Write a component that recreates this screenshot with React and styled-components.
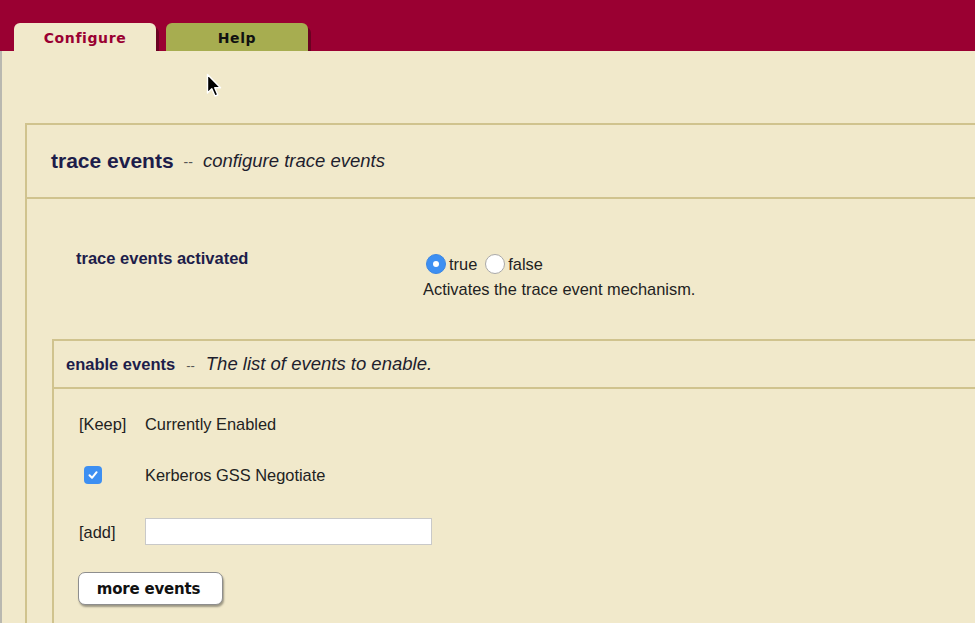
import React from "react";
import styled, { createGlobalStyle } from "styled-components";

const Global = createGlobalStyle`
  html, body { margin: 0; padding: 0; background: #f1e9cb; }
  body { font-family: "Liberation Sans", Arial, sans-serif; color: #222; }
  #root { width: 975px; height: 623px; overflow: hidden; }
`;

const Page = styled.div`
  position: relative;
  width: 975px;
  height: 623px;
  overflow: hidden;
  background: #f1e9cb;
`;

const TopBar = styled.div`
  height: 51px;
  background: #9a0032;
  display: flex;
  align-items: flex-end;
  gap: 10px;
  padding-left: 14px;
  overflow: hidden;
`;

const Tab = styled.div`
  width: 142px;
  height: 28px;
  box-sizing: border-box;
  border-radius: 6px 6px 0 0;
  background: ${(p) => (p.$active ? "#f1e9cb" : "#a7ad50")};
  color: ${(p) => (p.$active ? "#9a0032" : "#111")};
  box-shadow: 3px 4px 0 #6a0222;
  display: flex;
  align-items: center;
  justify-content: center;
  padding-top: 2px;
  font-family: "DejaVu Sans", Verdana, sans-serif;
  font-weight: bold;
  font-size: 14px;
  letter-spacing: 0.6px;
`;

const Content = styled.div`
  height: 572px;
  box-sizing: border-box;
  border-left: 2px solid #b9b8b0;
  padding: 72px 0 0 23px;
`;

const Panel = styled.section`
  border-top: 2px solid #d0c38e;
  border-left: 2px solid #d0c38e;
  width: calc(100% + 40px);
`;

const PanelHeader = styled.div`
  display: flex;
  align-items: center;
  height: ${(p) => p.$h}px;
  padding-left: ${(p) => p.$pl}px;
  border-bottom: 2px solid #d0c38e;
  white-space: nowrap;
`;

const Title = styled.span`
  font-weight: bold;
  font-size: ${(p) => p.$size}px;
  color: #1d1d4a;
`;

const Dash = styled.span`
  font-size: ${(p) => p.$size}px;
  color: #555;
  margin: 0 ${(p) => p.$gap}px;
  position: relative;
  top: 1px;
`;

const Subtitle = styled.span`
  font-style: italic;
  font-size: 18.5px;
  color: #1e1e2e;
`;

const MainBody = styled.div`
  padding: 49px 0 60px 25px;
`;

const SettingRow = styled.div`
  display: grid;
  grid-template-columns: 347px 1fr;
  padding-left: 24px;
  margin-bottom: 40px;
`;

const SettingLabel = styled.div`
  font-weight: bold;
  font-size: 16.5px;
  line-height: 20px;
  color: #1d1d4a;
`;

const SettingValue = styled.div`
  display: flex;
  flex-direction: column;
`;

const RadioRow = styled.div`
  display: flex;
  align-items: center;
  height: 20px;
  margin-top: 6px;
  margin-left: 3px;
  font-size: 16.4px;
`;

const RadioLabel = styled.label`
  display: flex;
  align-items: center;
  gap: 3px;
  margin-right: 8px;
`;

const Radio = styled.span`
  width: 20px;
  height: 20px;
  box-sizing: border-box;
  border-radius: 50%;
  background: ${(p) => (p.$on ? "#3d8ff2" : "#fff")};
  border: 1px solid ${(p) => (p.$on ? "#3a86e4" : "#a9a9a9")};
  display: flex;
  align-items: center;
  justify-content: center;
  &::after {
    content: "";
    display: ${(p) => (p.$on ? "block" : "none")};
    width: 6px;
    height: 6px;
    border-radius: 50%;
    background: #fff;
  }
`;

const Description = styled.div`
  margin-top: 5px;
  font-size: 16.4px;
  line-height: 20px;
`;

const InnerBody = styled.div`
  padding: 25px 0 60px 25px;
  display: flex;
  flex-direction: column;
  align-items: flex-start;
`;

const EventRow = styled.div`
  display: grid;
  grid-template-columns: 66px 1fr;
  align-items: center;
  min-height: 20px;
  margin-top: ${(p) => p.$mt || 0}px;
  font-size: 16.4px;
  line-height: 20px;
`;

const Checkbox = styled.span`
  width: 18px;
  height: 18px;
  margin-left: 5px;
  border-radius: 4px;
  background: #3d8ff2;
  display: flex;
  align-items: center;
  justify-content: center;
`;

const TextInput = styled.input`
  width: 287px;
  height: 27px;
  box-sizing: border-box;
  border: 1px solid #c9c9c9;
  background: #fff;
  margin: 0;
  padding: 0 4px;
  font-size: 15px;
`;

const Button = styled.button`
  margin-top: 27px;
  margin-left: -1px;
  width: 145px;
  height: 33px;
  border: 1px solid #8e8e8e;
  border-radius: 7px;
  background: #fff;
  box-shadow: 1px 2px 2px rgba(0, 0, 0, 0.35);
  font-family: "DejaVu Sans", Verdana, sans-serif;
  font-weight: bold;
  font-size: 15px;
  letter-spacing: -0.2px;
  color: #111;
  padding: 0 4px 0 0;
`;

const Cursor = styled.svg`
  position: absolute;
  left: 206px;
  top: 73px;
`;

export default function App() {
  return (
    <Page>
      <Global />
      <TopBar>
        <Tab $active>Configure</Tab>
        <Tab>Help</Tab>
      </TopBar>
      <Content>
        <Panel>
          <PanelHeader $h={72} $pl={24}>
            <Title $size={21}>trace events</Title>
            <Dash $size={14} $gap={10}>--</Dash>
            <Subtitle>configure trace events</Subtitle>
          </PanelHeader>
          <MainBody>
            <SettingRow>
              <SettingLabel>trace events activated</SettingLabel>
              <SettingValue>
                <RadioRow>
                  <RadioLabel>
                    <Radio $on />
                    true
                  </RadioLabel>
                  <RadioLabel>
                    <Radio />
                    false
                  </RadioLabel>
                </RadioRow>
                <Description>Activates the trace event mechanism.</Description>
              </SettingValue>
            </SettingRow>
            <Panel>
              <PanelHeader $h={46} $pl={12}>
                <Title $size={16.5}>enable events</Title>
                <Dash $size={13} $gap={11}>--</Dash>
                <Subtitle>The list of events to enable.</Subtitle>
              </PanelHeader>
              <InnerBody>
                <EventRow>
                  <span>[Keep]</span>
                  <span>Currently Enabled</span>
                </EventRow>
                <EventRow $mt={31}>
                  <Checkbox>
                    <svg width="12" height="12" viewBox="0 0 12 12">
                      <path d="M2.5 6.3 L5 8.8 L9.6 3.2" fill="none" stroke="#fff" strokeWidth="2" strokeLinecap="round" strokeLinejoin="round" />
                    </svg>
                  </Checkbox>
                  <span>Kerberos GSS Negotiate</span>
                </EventRow>
                <EventRow $mt={33}>
                  <span>[add]</span>
                  <TextInput type="text" defaultValue="" />
                </EventRow>
                <Button type="button">more events</Button>
              </InnerBody>
            </Panel>
          </MainBody>
        </Panel>
      </Content>
      <Cursor width="16" height="26" viewBox="0 0 16 26">
        <path d="M1.5 1.5 L1.5 20 L5.8 15.8 L9 23 L11.8 21.8 L8.7 14.8 L14.5 14.8 Z" fill="#000" stroke="#fff" strokeWidth="1.4" strokeLinejoin="round" />
      </Cursor>
    </Page>
  );
}
